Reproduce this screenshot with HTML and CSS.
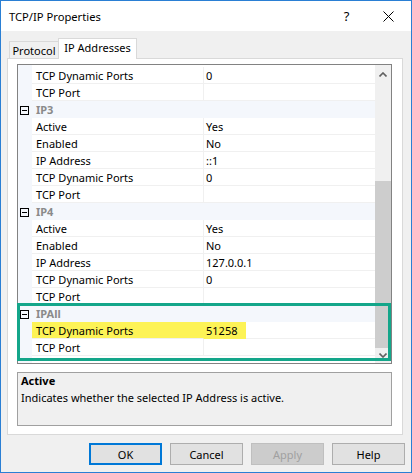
FILE: index.html
```html
<!DOCTYPE html>
<html>
<head>
<meta charset="utf-8">
<link rel="stylesheet" href="styles.css">
</head>
<body>
<div class="window">
  <div class="titlebar">
    <span class="title">TCP/IP Properties</span>
    <span class="help">?</span>
    <span class="close"><svg width="11" height="11" viewBox="0 0 11 11"><path d="M0.5 0.5 L10.5 10.5 M10.5 0.5 L0.5 10.5" stroke="#000" stroke-width="1" fill="none"/></svg></span>
  </div>
  <div class="tabs">
    <div class="tab">Protocol</div>
    <div class="tab active">IP Addresses</div>
  </div>
  <div class="panel">
    <div class="grid">
      <div class="rows">
        <div class="row first"><div class="gut"></div><div class="name">TCP Dynamic Ports</div><div class="val">0</div></div>
        <div class="row"><div class="gut"></div><div class="name">TCP Port</div><div class="val"></div></div>
        <div class="row cat"><div class="gut"><span class="minus"></span></div><div class="catname">IP3</div></div>
        <div class="row"><div class="gut"></div><div class="name">Active</div><div class="val">Yes</div></div>
        <div class="row"><div class="gut"></div><div class="name">Enabled</div><div class="val">No</div></div>
        <div class="row"><div class="gut"></div><div class="name">IP Address</div><div class="val">::1</div></div>
        <div class="row"><div class="gut"></div><div class="name">TCP Dynamic Ports</div><div class="val">0</div></div>
        <div class="row"><div class="gut"></div><div class="name">TCP Port</div><div class="val"></div></div>
        <div class="row cat"><div class="gut"><span class="minus"></span></div><div class="catname">IP4</div></div>
        <div class="row"><div class="gut"></div><div class="name">Active</div><div class="val">Yes</div></div>
        <div class="row"><div class="gut"></div><div class="name">Enabled</div><div class="val">No</div></div>
        <div class="row"><div class="gut"></div><div class="name">IP Address</div><div class="val">127.0.0.1</div></div>
        <div class="row"><div class="gut"></div><div class="name">TCP Dynamic Ports</div><div class="val">0</div></div>
        <div class="row"><div class="gut"></div><div class="name">TCP Port</div><div class="val"></div></div>
        <div class="row cat"><div class="gut"><span class="minus"></span></div><div class="catname">IPAll</div></div>
        <div class="row"><div class="gut"></div><div class="name hl">TCP Dynamic Ports</div><div class="val"><span class="hlval">51258</span></div></div>
        <div class="row"><div class="gut"></div><div class="name">TCP Port</div><div class="val"></div></div>
      </div>
      <div class="scrollbar">
        <div class="sb-btn sb-up"><svg width="8" height="5" viewBox="0 0 8 5"><path d="M0.5 4.5 L4 1 L7.5 4.5" stroke="#606060" stroke-width="1.6" fill="none"/></svg></div>
        <div class="sb-space"></div>
        <div class="sb-thumb"></div>
        <div class="sb-btn sb-down"><svg width="8" height="5" viewBox="0 0 8 5"><path d="M0.5 0.5 L4 4 L7.5 0.5" stroke="#606060" stroke-width="1.6" fill="none"/></svg></div>
      </div>
      <div class="annot"></div>
    </div>
    <div class="desc">
      <div class="desc-title">Active</div>
      <div class="desc-text">Indicates whether the selected IP Address is active.</div>
    </div>
  </div>
  <div class="buttons">
    <div class="btn default">OK</div>
    <div class="btn">Cancel</div>
    <div class="btn disabled">Apply</div>
    <div class="btn">Help</div>
  </div>
</div>
</body>
</html>
```
FILE: styles.css
```css
* { box-sizing: border-box; }
html, body { margin: 0; padding: 0; }
body {
  width: 412px;
  height: 473px;
  font-family: "Noto Sans", "Open Sans", sans-serif;
  font-size: 11px;
  color: #000;
  background: #fff;
}
.window {
  width: 412px;
  height: 473px;
  border: 1px solid #2a7fd4;
  background: #f0f0f0;
  display: flex;
  flex-direction: column;
}
.titlebar {
  height: 30px;
  background: #fff;
  display: flex;
  align-items: center;
}
.title {
  flex: 1;
  padding-left: 8px;
  font-size: 11.2px;
}
.help {
  width: 37px;
  text-align: center;
  font-size: 13px;
}
.close {
  width: 46px;
  height: 30px;
  display: flex;
  align-items: center;
  justify-content: center;
}
.close svg { display: block; }
.tabs {
  margin-top: 7px;
  margin-left: 8px;
  height: 21px;
  margin-bottom: -1px;
  display: flex;
  align-items: flex-end;
  position: relative;
  z-index: 1;
}
.tab {
  height: 17px;
  margin-bottom: 1px;
  width: 50px;
  border: 1px solid #d9d9d9;
  border-bottom: none;
  background: #f0f0f0;
  text-align: center;
  line-height: 17px;
  white-space: nowrap;
}
.tab.active {
  width: 79px;
  height: 21px;
  margin-bottom: 0;
  margin-left: -1px;
  background: #fff;
  line-height: 18px;
}
.panel {
  margin-left: 6px;
  width: 396px;
  height: 377px;
  border: 1px solid #d9d9d9;
  background: #fff;
  padding: 5px 0 0 9px;
}
.grid {
  position: relative;
  width: 375px;
  height: 300px;
  border: 1px solid #828282;
  display: flex;
  background: #fff;
}
.rows {
  flex: 1;
  background: linear-gradient(to right, #f4f7fc 14px, #fff 14px);
  overflow: hidden;
}
.row {
  display: flex;
  height: 17px;
}
.row.first { margin-top: 2px; }
.gut {
  width: 14px;
  flex: none;
}
.name {
  width: 172px;
  flex: none;
  padding-left: 4px;
  line-height: 17px;
  border-bottom: 1px solid #f0f0f0;
  border-right: 1px solid #f0f0f0;
  white-space: nowrap;
}
.val {
  flex: 1;
  padding-left: 2px;
  line-height: 17px;
  border-bottom: 1px solid #f0f0f0;
  white-space: nowrap;
}
.row.cat {
  background: #f4f7fc;
}
.row.cat .gut {
  padding-left: 2px;
  padding-top: 5px;
}
.minus {
  display: block;
  width: 9px;
  height: 9px;
  border: 1px solid #000;
  position: relative;
}
.minus::after {
  content: "";
  position: absolute;
  left: 1px;
  top: 3px;
  width: 5px;
  height: 1px;
  background: #000;
}
.catname {
  padding-left: 4px;
  line-height: 17px;
  font-weight: bold;
  color: #8a8a8a;
}
.name.hl {
  background: #fdf356;
  border-right-color: #fdf356;
}
.val .hlval {
  display: inline-block;
  margin-left: -2px;
  padding-left: 2px;
  width: 42px;
  background: #fdf356;
}
.scrollbar {
  width: 16px;
  flex: none;
  background: #f0f0f0;
  display: flex;
  flex-direction: column;
}
.sb-btn {
  display: flex;
  justify-content: center;
}
.sb-btn svg { display: block; }
.sb-up { height: 17px; padding-top: 7px; }
.sb-space { height: 99px; }
.sb-thumb { flex: 1; background: #cdcdcd; }
.sb-down { height: 15px; align-items: center; }
.annot {
  position: absolute;
  left: -1px;
  top: 238px;
  width: 374px;
  height: 58px;
  border: 3px solid #14a68a;
}
.desc {
  margin-top: 8px;
  width: 375px;
  height: 54px;
  border: 1px solid #a0a0a0;
  background: #f0f0f0;
  padding-left: 3px;
}
.desc-title {
  font-weight: bold;
  line-height: 16px;
}
.desc-text {
  line-height: 17px;
}
.buttons {
  margin-top: 8px;
  height: 22px;
  display: flex;
  justify-content: flex-end;
  gap: 8px;
  padding-right: 6px;
}
.btn {
  width: 73px;
  height: 22px;
  border: 1px solid #adadad;
  background: #e1e1e1;
  display: flex;
  align-items: center;
  justify-content: center;
}
.btn.default {
  border: 2px solid #0078d7;
}
.btn.disabled {
  background: #cccccc;
  border-color: #bfbfbf;
  color: #a0a0a0;
}
```
